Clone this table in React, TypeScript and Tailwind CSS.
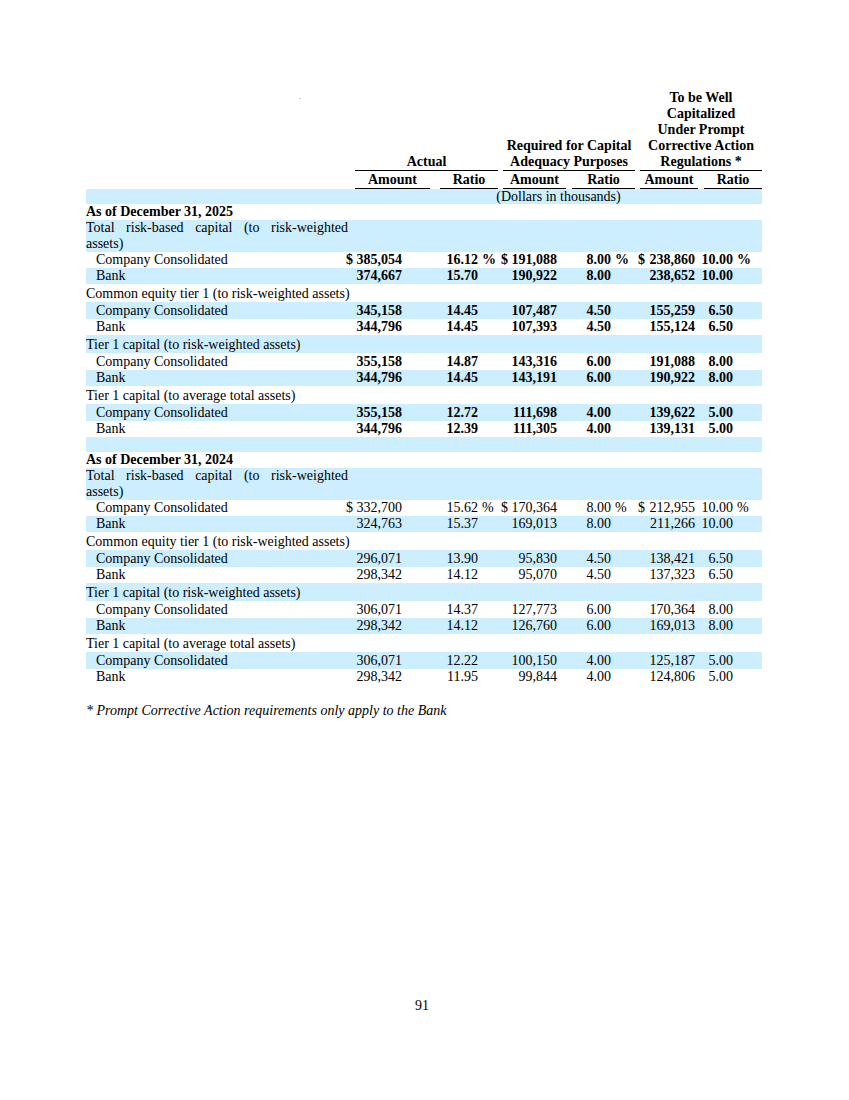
import React from 'react';

type Row = {
  label: string;
  amt: string;
  ratio: string;
  reqAmt: string;
  reqRatio: string;
  wellAmt: string;
  wellRatio: string;
  dollar?: boolean;
};

type Group = {
  label: string;
  first?: boolean;
  rows: Row[];
};

type Section = {
  title: string;
  bold: boolean;
  groups: Group[];
};

const r = (
  label: string,
  amt: string,
  ratio: string,
  reqAmt: string,
  reqRatio: string,
  wellAmt: string,
  wellRatio: string,
  dollar = false
): Row => ({ label, amt, ratio, reqAmt, reqRatio, wellAmt, wellRatio, dollar });

const sections: Section[] = [
  {
    title: 'As of December 31, 2025',
    bold: true,
    groups: [
      {
        label: 'Total risk-based capital (to risk-weighted assets)',
        first: true,
        rows: [
          r('Company Consolidated', '385,054', '16.12', '191,088', '8.00', '238,860', '10.00', true),
          r('Bank', '374,667', '15.70', '190,922', '8.00', '238,652', '10.00'),
        ],
      },
      {
        label: 'Common equity tier 1 (to risk-weighted assets)',
        rows: [
          r('Company Consolidated', '345,158', '14.45', '107,487', '4.50', '155,259', '6.50'),
          r('Bank', '344,796', '14.45', '107,393', '4.50', '155,124', '6.50'),
        ],
      },
      {
        label: 'Tier 1 capital (to risk-weighted assets)',
        rows: [
          r('Company Consolidated', '355,158', '14.87', '143,316', '6.00', '191,088', '8.00'),
          r('Bank', '344,796', '14.45', '143,191', '6.00', '190,922', '8.00'),
        ],
      },
      {
        label: 'Tier 1 capital (to average total assets)',
        rows: [
          r('Company Consolidated', '355,158', '12.72', '111,698', '4.00', '139,622', '5.00'),
          r('Bank', '344,796', '12.39', '111,305', '4.00', '139,131', '5.00'),
        ],
      },
    ],
  },
  {
    title: 'As of December 31, 2024',
    bold: false,
    groups: [
      {
        label: 'Total risk-based capital (to risk-weighted assets)',
        first: true,
        rows: [
          r('Company Consolidated', '332,700', '15.62', '170,364', '8.00', '212,955', '10.00', true),
          r('Bank', '324,763', '15.37', '169,013', '8.00', '211,266', '10.00'),
        ],
      },
      {
        label: 'Common equity tier 1 (to risk-weighted assets)',
        rows: [
          r('Company Consolidated', '296,071', '13.90', '95,830', '4.50', '138,421', '6.50'),
          r('Bank', '298,342', '14.12', '95,070', '4.50', '137,323', '6.50'),
        ],
      },
      {
        label: 'Tier 1 capital (to risk-weighted assets)',
        rows: [
          r('Company Consolidated', '306,071', '14.37', '127,773', '6.00', '170,364', '8.00'),
          r('Bank', '298,342', '14.12', '126,760', '6.00', '169,013', '8.00'),
        ],
      },
      {
        label: 'Tier 1 capital (to average total assets)',
        rows: [
          r('Company Consolidated', '306,071', '12.22', '100,150', '4.00', '125,187', '5.00'),
          r('Bank', '298,342', '11.95', '99,844', '4.00', '124,806', '5.00'),
        ],
      },
    ],
  },
];

const BLUE = 'bg-[#cceeff]';

const HeaderGroup = ({
  title,
  width,
  sub,
}: {
  title: string[];
  width: string;
  sub: [string, string][];
}) => (
  <div className={`${width} flex flex-col`}>
    <div className="border-b border-black text-center">
      {title.map((t) => (
        <div key={t}>{t}</div>
      ))}
    </div>
    <div className="flex justify-between mt-px">
      {sub.map(([label, w]) => (
        <div key={label} className={`${w} text-center border-b border-black`}>
          {label}
        </div>
      ))}
    </div>
  </div>
);

const DataRow = ({
  row,
  bold,
  bg,
  height,
}: {
  row: Row;
  bold: boolean;
  bg: boolean;
  height: string;
}) => {
  const pct = row.dollar ? '%' : '';
  const num = bold ? 'font-bold' : '';
  return (
    <div className={`flex ${height} ${bg ? BLUE : ''}`}>
      <div className="w-[260px] pl-[10px]">{row.label}</div>
      <div className={`w-[56px] flex justify-between ${num}`}>
        <span>{row.dollar ? '$' : ''}</span>
        <span>{row.amt}</span>
      </div>
      <div className={`w-[76px] text-right ${num}`}>{row.ratio}</div>
      <div className={`w-[16px] pl-[4px] ${num}`}>{pct}</div>
      <div className={`w-[63px] pl-[7px] flex justify-between ${num}`}>
        <span>{row.dollar ? '$' : ''}</span>
        <span>{row.reqAmt}</span>
      </div>
      <div className={`w-[54px] text-right ${num}`}>{row.reqRatio}</div>
      <div className={`w-[16px] pl-[4px] ${num}`}>{pct}</div>
      <div className={`w-[68px] pl-[11px] flex justify-between ${num}`}>
        <span>{row.dollar ? '$' : ''}</span>
        <span>{row.wellAmt}</span>
      </div>
      <div className={`w-[38px] text-right ${num}`}>{row.wellRatio}</div>
      <div className={`w-[16px] pl-[4px] ${num}`}>{pct}</div>
    </div>
  );
};

const SectionBlock = ({ section }: { section: Section }) => {
  let i = 0;
  const nextBg = () => i++ % 2 === 1;
  return (
    <div>
      <div className={`h-[16px] font-bold ${nextBg() ? BLUE : ''}`}>{section.title}</div>
      {section.groups.map((g) => (
        <div key={g.label}>
          {g.first ? (
            <div className={`${nextBg() ? BLUE : ''}`}>
              <div className="w-[262px] text-justify">{g.label}</div>
            </div>
          ) : (
            <div className={`h-[18px] pt-[2px] ${nextBg() ? BLUE : ''}`}>{g.label}</div>
          )}
          {g.rows.map((row, idx) => (
            <DataRow
              key={row.label}
              row={row}
              bold={section.bold}
              bg={nextBg()}
              height={idx === 0 && !g.first ? 'h-[17px] pt-px' : 'h-[16px]'}
            />
          ))}
        </div>
      ))}
    </div>
  );
};

export default function App() {
  return (
    <div
      className="w-[849px] min-h-[1100px] bg-white text-black text-[14px] leading-[16px]"
      style={{ fontFamily: '"Liberation Serif", "Times New Roman", serif' }}
    >
      <div className="pl-[86px] pt-[90px] w-[762px]">
        <div className="flex items-end font-bold">
          <div className="w-[269px] self-start pl-[213px] pt-[2px] text-[8px] leading-[10px] font-normal text-gray-500">
            .
          </div>
          <HeaderGroup
            title={['Actual']}
            width="w-[143px]"
            sub={[
              ['Amount', 'w-[75px]'],
              ['Ratio', 'w-[58px]'],
            ]}
          />
          <div className="w-[5px]" />
          <HeaderGroup
            title={['Required for Capital', 'Adequacy Purposes']}
            width="w-[132px]"
            sub={[
              ['Amount', 'w-[63px]'],
              ['Ratio', 'w-[63px]'],
            ]}
          />
          <div className="w-[5px]" />
          <HeaderGroup
            title={['To be Well', 'Capitalized', 'Under Prompt', 'Corrective Action', 'Regulations *']}
            width="w-[122px]"
            sub={[
              ['Amount', 'w-[58px]'],
              ['Ratio', 'w-[58px]'],
            ]}
          />
        </div>

        <div className={`flex h-[15px] ${BLUE}`}>
          <div className="w-[269px]" />
          <div className="w-[407px] text-center">(Dollars in thousands)</div>
        </div>

        <SectionBlock section={sections[0]} />
        <div className={`h-[15px] ${BLUE}`} />
        <SectionBlock section={sections[1]} />

        <div className="mt-[18px] italic">* Prompt Corrective Action requirements only apply to the Bank</div>
      </div>

      <div className="mt-[279px] w-[844px] text-center">91</div>
    </div>
  );
}
